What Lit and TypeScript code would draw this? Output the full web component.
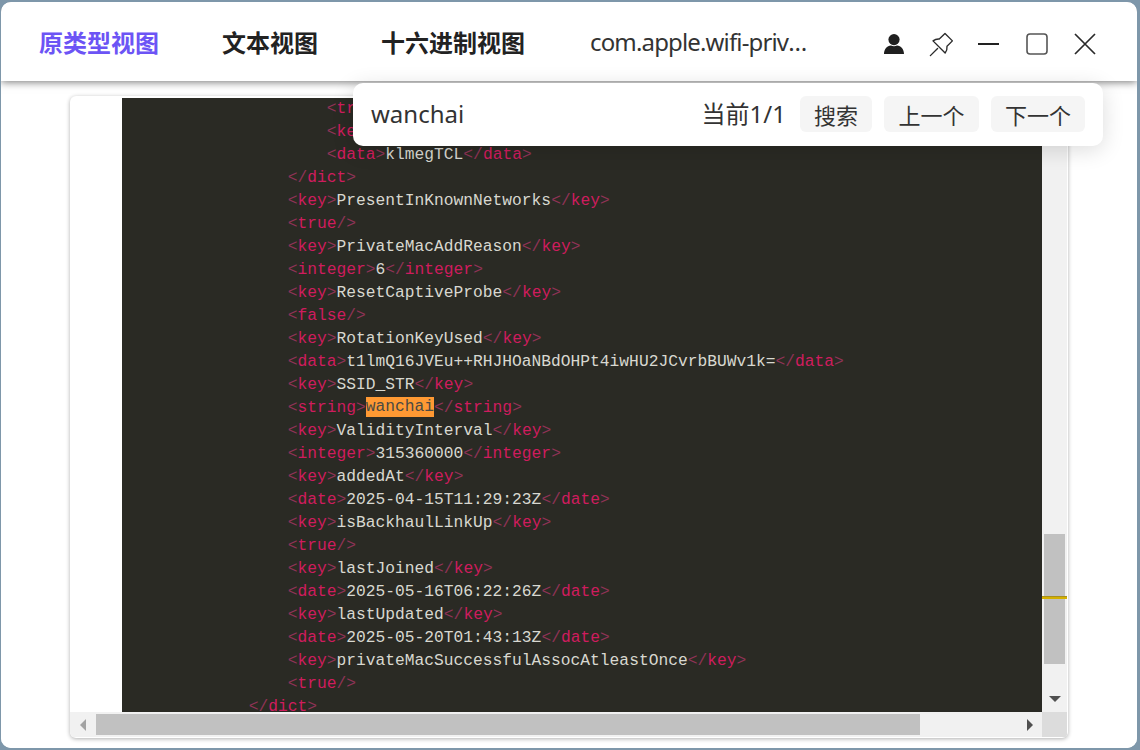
import { LitElement, html, css } from "lit";
import { customElement } from "lit/decorators.js";

const LINES: [number, string][] = [
  [21, "<true/>"],
  [21, "<key>Data</key>"],
  [21, "<data>klmegTCL</data>"],
  [17, "</dict>"],
  [17, "<key>PresentInKnownNetworks</key>"],
  [17, "<true/>"],
  [17, "<key>PrivateMacAddReason</key>"],
  [17, "<integer>6</integer>"],
  [17, "<key>ResetCaptiveProbe</key>"],
  [17, "<false/>"],
  [17, "<key>RotationKeyUsed</key>"],
  [17, "<data>t1lmQ16JVEu++RHJHOaNBdOHPt4iwHU2JCvrbBUWv1k=</data>"],
  [17, "<key>SSID_STR</key>"],
  [17, "<string>wanchai</string>"],
  [17, "<key>ValidityInterval</key>"],
  [17, "<integer>315360000</integer>"],
  [17, "<key>addedAt</key>"],
  [17, "<date>2025-04-15T11:29:23Z</date>"],
  [17, "<key>isBackhaulLinkUp</key>"],
  [17, "<true/>"],
  [17, "<key>lastJoined</key>"],
  [17, "<date>2025-05-16T06:22:26Z</date>"],
  [17, "<key>lastUpdated</key>"],
  [17, "<date>2025-05-20T01:43:13Z</date>"],
  [17, "<key>privateMacSuccessfulAssocAtleastOnce</key>"],
  [17, "<true/>"],
  [13, "</dict>"],
];

function renderLine(src: string) {
  const parts = src.split(/(<\/?[A-Za-z]+\/?>)/).filter((p) => p.length);
  return parts.map((p) => {
    const m = p.match(/^(<\/?)([A-Za-z]+)(\/?>)$/);
    if (m) {
      return html`<span class="br">${m[1]}</span><span class="tag">${m[2]}</span><span class="br">${m[3]}</span>`;
    }
    if (p === "wanchai") return html`<span class="hit">${p}</span>`;
    return html`<span class="txt">${p}</span>`;
  });
}

@customElement("app-root")
export class AppRoot extends LitElement {
  static styles = css`
    :host {
      display: block;
      width: 1140px;
      height: 750px;
      background: #7e97aa;
      font-family: "Noto Sans", "Noto Sans CJK SC", sans-serif;
      overflow: hidden;
    }
    .desktop {
      height: 750px;
      padding: 2px 3px 2px 1px;
      box-sizing: border-box;
    }
    .window {
      position: relative;
      height: 100%;
      background: #fff;
      border-radius: 10px;
      overflow: hidden;
      display: flex;
      flex-direction: column;
    }
    .titlebar {
      height: 79px;
      flex: none;
      display: flex;
      align-items: center;
      padding: 0 41px 0 38px;
      background: #fff;
      box-shadow: 0 1px 8px rgba(0, 0, 0, 0.55);
      position: relative;
      z-index: 1;
      color: #222;
    }
    .tabs {
      display: flex;
      gap: 63px;
      font-size: 24px;
      font-weight: 700;
      white-space: nowrap;
      font-family: "Noto Sans CJK SC", sans-serif;
      line-height: 34px;
    }
    .tab.active {
      color: #6c54f5;
    }
    .file {
      margin-left: 65px;
      width: 222px;
      font-size: 24px;
      letter-spacing: -0.85px;
      line-height: 34px;
      color: #333;
      white-space: nowrap;
      overflow: hidden;
      text-overflow: ellipsis;
      flex: none;
    }
    .icons {
      margin-left: auto;
      margin-top: 5px;
      display: flex;
      align-items: center;
      color: #1f1f1f;
    }
    .icons svg {
      display: block;
      flex: none;
    }
    .i-user { margin-right: 23px; }
    .i-pin { margin-right: 22px; }
    .i-min { margin-right: 27px; }
    .i-max { margin-right: 26px; }
    .search {
      position: absolute;
      left: 352px;
      top: 81px;
      width: 750px;
      height: 63px;
      box-sizing: border-box;
      background: #fff;
      border-radius: 10px;
      box-shadow: 0 4px 22px rgba(0, 0, 0, 0.14);
      z-index: 2;
      display: flex;
      align-items: center;
      padding: 0 18px;
      color: #333;
    }
    .query {
      flex: 1;
      font-size: 24px;
      line-height: 34px;
      margin-top: -2px;
    }
    .count {
      font-size: 24px;
      line-height: 34px;
      margin-right: 14px;
      margin-top: -1px;
      white-space: nowrap;
    }
    .btn {
      height: 36px;
      margin-top: -1px;
      border-radius: 6px;
      background: #f5f5f5;
      display: flex;
      align-items: center;
      justify-content: center;
      font-size: 22px;
      color: #333;
      box-sizing: border-box;
    }
    .btn + .btn { margin-left: 12px; }
    .b1 { width: 72px; }
    .b2 { width: 95px; }
    .b3 { width: 94px; }
    .body {
      flex: 1;
      min-height: 0;
      padding: 15px 0 0 69px;
      background: #fff;
    }
    .card {
      width: 998px;
      height: 642px;
      background: #fff;
      border-radius: 6px;
      box-shadow: 0 1px 4px rgba(0, 0, 0, 0.32);
      overflow: hidden;
      display: grid;
      grid-template-columns: 52px 920px 25px;
      grid-template-rows: 616px 25px;
    }
    .code {
      margin-top: 2px;
      background: #2a2a24;
      overflow: hidden;
      font-family: "Liberation Mono", monospace;
      font-size: 16.25px;
      line-height: 23px;
    }
    .lines {
      margin-top: -1px;
    }
    .line {
      height: 23px;
      white-space: pre;
    }
    .br { color: #8f3356; }
    .tag { color: #cf1c5e; }
    .txt { color: #d8d8d0; }
    .hit {
      display: inline-block;
      height: 20px;
      line-height: 20px;
      background: #ff9933;
      color: #4a4a44;
      vertical-align: top;
      margin-top: 1px;
    }
    .vbar {
      position: relative;
      margin-top: 2px;
      background: #f1f1f1;
      display: flex;
      flex-direction: column;
      align-items: center;
    }
    .vthumb {
      width: 21px;
      height: 130px;
      margin-top: 436px;
      background: #c1c1c1;
    }
    .arrow-d {
      margin-top: 32px;
      width: 0;
      height: 0;
      border-left: 6px solid transparent;
      border-right: 6px solid transparent;
      border-top: 6px solid #505050;
    }
    .mark {
      position: absolute;
      left: 0;
      right: 0;
      top: 498px;
      height: 3px;
      background: #d4b000;
      border-top: 1px solid #a89020;
      box-sizing: border-box;
    }
    .hbar {
      grid-column: 1 / span 2;
      background: #f1f1f1;
      display: flex;
      align-items: center;
      padding-left: 10px;
    }
    .arrow-l {
      width: 0;
      height: 0;
      border-top: 6px solid transparent;
      border-bottom: 6px solid transparent;
      border-right: 6px solid #a3a3a3;
    }
    .hthumb {
      width: 824px;
      height: 21px;
      margin-left: 10px;
      background: #c1c1c1;
    }
    .arrow-r {
      margin-left: 107px;
      width: 0;
      height: 0;
      border-top: 6px solid transparent;
      border-bottom: 6px solid transparent;
      border-left: 6px solid #505050;
    }
    .corner {
      background: #dcdcdc;
    }
  `;

  render() {
    return html`
      <div class="desktop">
        <div class="window">
          <div class="titlebar">
            <div class="tabs">
              <div class="tab active">原类型视图</div>
              <div class="tab">文本视图</div>
              <div class="tab">十六进制视图</div>
            </div>
            <div class="file">com.apple.wifi-private-mac-networks.plist</div>
            <div class="icons">
              <svg class="i-user" width="22" height="22" viewBox="0 0 22 22" fill="currentColor">
                <circle cx="11" cy="6.6" r="5.6"></circle>
                <path d="M1 21c0-5.2 3-8 7-8.6 1.8 1 4.2 1 6 0 4 .6 7 3.4 7 8.6z"></path>
              </svg>
              <svg class="i-pin" width="28" height="28" viewBox="64 64 896 896" fill="none" stroke="#2c2c2c" stroke-width="44" stroke-linejoin="round" stroke-linecap="round">
                <path d="M608 175L845 412 672 585c8 75-10 150-60 215L224 412c60-45 130-65 200-60z"></path>
                <path d="M370 654L140 884"></path>
              </svg>
              <svg class="i-min" width="21" height="22" viewBox="0 0 21 22">
                <rect x="0" y="10" width="21" height="2" fill="#222"></rect>
              </svg>
              <svg class="i-max" width="22" height="22" viewBox="0 0 22 22" fill="none">
                <rect x="1" y="1" width="20" height="20" rx="3" stroke="#555" stroke-width="1.6"></rect>
              </svg>
              <svg width="22" height="22" viewBox="0 0 22 22" fill="none">
                <path d="M1 1l20 20M21 1L1 21" stroke="#2a2a2a" stroke-width="1.7"></path>
              </svg>
            </div>
          </div>
          <div class="search">
            <div class="query">wanchai</div>
            <div class="count">当前1/1</div>
            <div class="btn b1">搜索</div>
            <div class="btn b2">上一个</div>
            <div class="btn b3">下一个</div>
          </div>
          <div class="body">
            <div class="card">
              <div></div>
              <div class="code">
                <div class="lines">
                  ${LINES.map(([n, src]) => html`<div class="line">${" ".repeat(n)}${renderLine(src)}</div>`)}
                </div>
              </div>
              <div class="vbar">
                <div class="vthumb"></div>
                <div class="arrow-d"></div>
                <div class="mark"></div>
              </div>
              <div class="hbar">
                <div class="arrow-l"></div>
                <div class="hthumb"></div>
                <div class="arrow-r"></div>
              </div>
              <div class="corner"></div>
            </div>
          </div>
        </div>
      </div>
    `;
  }
}
